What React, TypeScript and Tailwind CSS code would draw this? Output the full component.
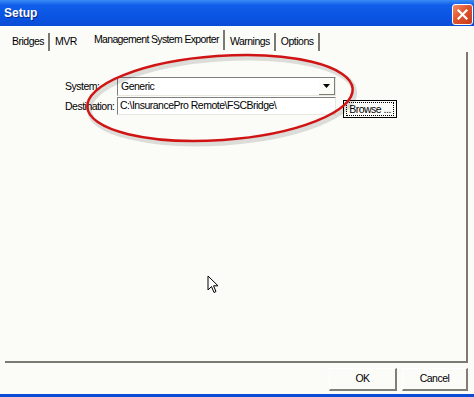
import React from 'react';

const font = { fontFamily: '"Liberation Sans", Arial, sans-serif' };

function Tab({ label, edge = true }: { label: string; edge?: boolean }) {
  return (
    <div
      className={
        edge
          ? 'flex items-center h-[18px] pr-[4px] border-r-2 border-r-[#7a7a72] whitespace-nowrap'
          : 'flex items-center h-[18px] pr-[4px] whitespace-nowrap'
      }
    >
      <span>{label}</span>
    </div>
  );
}

function XpButton({ children, className }: { children: React.ReactNode; className?: string }) {
  return (
    <div
      className={
        'flex items-center justify-center h-[23px] bg-[#fbfbf8] border-r-2 border-b-2 border-r-[#7f7f77] border-b-[#7f7f77] border-l border-t border-l-white border-t-white ' +
        (className ?? '')
      }
    >
      {children}
    </div>
  );
}

export default function App() {
  return (
    <div
      className="w-[474px] h-[397px] flex flex-col text-[10.5px] tracking-[-0.5px] text-black overflow-hidden relative"
      style={font}
    >
      {/* Title bar */}
      <div className="h-[26px] flex items-center justify-between pl-[4px] pr-[1px] bg-[linear-gradient(180deg,#3b8cf8_0%,#0f5ee9_20%,#0a55e4_60%,#0a4cd6_100%)]">
        <span className="text-white font-bold text-[12px] tracking-normal [text-shadow:1px_1px_0_#0a2a8a]">Setup</span>
        <div className="w-[21px] h-[21px] mt-[2px] rounded-[3px] border border-white bg-[linear-gradient(135deg,#f0906a,#e0552e_45%,#c4391a)] flex items-center justify-center">
          <svg width="11" height="11" viewBox="0 0 11 11">
            <path d="M1.5 1.5 L9.5 9.5 M9.5 1.5 L1.5 9.5" stroke="white" strokeWidth="2.2" strokeLinecap="square" />
          </svg>
        </div>
      </div>

      {/* Body */}
      <div className="flex-1 flex flex-col bg-[#fbfbf8] pl-[5px] pr-[6px]">
        {/* Tabs */}
        <div className="flex items-end h-[26px] pl-[7px] pb-[1px]">
          <Tab label="Bridges" />
          <div className="w-[5px]" />
          <Tab label="MVR" edge={false} />
          <div className="w-[13px]" />
          <div className="flex items-center h-[20px] pr-[4px] mb-[1px] border-r-2 border-r-[#7a7a72] whitespace-nowrap tracking-[-0.65px]">
            <span>Management System Exporter</span>
          </div>
          <div className="w-[5px]" />
          <Tab label="Warnings" />
          <div className="w-[5px]" />
          <Tab label="Options" />
        </div>

        {/* Panel */}
        <div className="h-[311px] border-r-2 border-b-2 border-r-[#7a7a72] border-b-[#7a7a72] flex flex-col pt-[25px] pl-[60px]">
          <div className="flex items-center h-[19px]">
            <span className="w-[52px] whitespace-nowrap">System:</span>
            <div className="w-[219px] h-[19px] bg-white border border-t-[#808080] border-l-[#808080] border-r-[#e8e8e0] border-b-[#e8e8e0] flex items-center justify-between pl-[3px]">
              <span>Generic</span>
              <div className="w-[16px] h-[17px] bg-[#fbfbf8] border-r border-b border-[#7f7f77] flex items-center justify-center">
                <svg width="7" height="4" viewBox="0 0 7 4">
                  <path d="M0 0 H7 L3.5 4 Z" fill="black" />
                </svg>
              </div>
            </div>
          </div>
          <div className="flex items-start h-[22px] mt-[1px]">
            <span className="w-[52px] whitespace-nowrap leading-[18px]">Destination:</span>
            <div className="w-[219px] h-[18px] bg-white border border-t-[#808080] border-l-[#808080] border-r-[#e8e8e0] border-b-[#e8e8e0] flex items-center pl-[2px] whitespace-nowrap">
              <span>C:\InsurancePro Remote\FSCBridge\</span>
            </div>
            <div className="ml-[7px] mt-[3px] w-[54px] h-[18px] border border-black bg-[#fbfbf8] flex items-center justify-center">
              <span className="border border-dotted border-black px-[2px] leading-[12px] whitespace-nowrap">Browse ...</span>
            </div>
          </div>
        </div>

        {/* Buttons */}
        <div className="flex justify-end gap-[5px] pt-[5px]">
          <XpButton className="w-[68px]">OK</XpButton>
          <XpButton className="w-[66px]">Cancel</XpButton>
        </div>
      </div>
      <div className="h-[3px] bg-[#0a4cd6]" />

      {/* Hand-drawn red ellipse annotation */}
      <svg className="absolute left-0 top-0 pointer-events-none" width="474" height="397">
        <ellipse cx="222" cy="101" rx="133" ry="42" transform="rotate(-4 222 101)" fill="none" stroke="#000" strokeOpacity="0.12" strokeWidth="5" />
        <ellipse cx="220" cy="98" rx="133" ry="42" transform="rotate(-4 220 98)" fill="none" stroke="#d01414" strokeWidth="2.5" />
      </svg>

      {/* Mouse cursor */}
      <svg className="absolute left-[207px] top-[275px] pointer-events-none" width="14" height="20" viewBox="0 0 14 20">
        <path d="M1 1 L1 15 L4.5 11.5 L7 17.5 L9 16.5 L6.5 10.8 L11 10.8 Z" fill="white" stroke="black" strokeWidth="1" />
      </svg>
    </div>
  );
}
